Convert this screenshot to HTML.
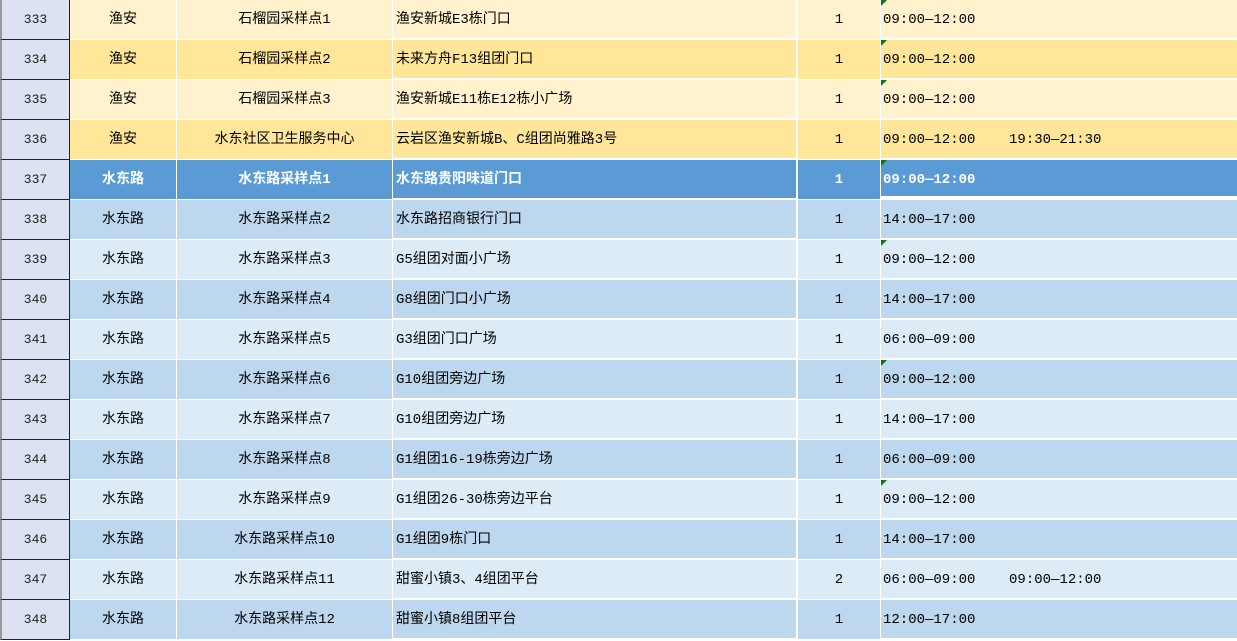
<!DOCTYPE html><html><head><meta charset="utf-8"><style>
body{margin:0;width:1237px;height:639px;overflow:hidden;background:#fff;font-family:"Liberation Mono","Noto Sans CJK SC",sans-serif;font-size:14px;color:#000}
.r{position:absolute;left:0;width:1237px;height:40px}
.c{position:absolute;top:0;height:39px;line-height:41px;border-right:1px solid #fff;border-bottom:1px solid #fff;white-space:pre;box-sizing:content-box}
.h{left:0;width:67px;background:#dce2f1;border-left:2px solid #9a9a9a;border-right:1px solid #222;border-bottom:1px solid #222;text-align:center;font-size:13px;color:#222;line-height:39px}
.b{left:70px;width:106px;text-align:center}
.cc{left:177px;width:215px;text-align:center}
.d{left:393px;width:404px;padding-left:3px;box-sizing:border-box;width:404px}
.e{left:798px;width:82px;text-align:center}
.f{left:881px;width:356px;padding-left:2px;box-sizing:border-box;border-right:none}
.t::before{content:"";position:absolute;left:0;top:0;border-top:6px solid #0a7a0a;border-right:6px solid transparent}
.bold{font-weight:bold;color:#fff}
</style></head><body>
<div id="g"></div>
<script>
var rows=[
["333","渔安","石榴园采样点1","渔安新城E3栋门口","1","09:00—12:00","#fff2cc",1],
["334","渔安","石榴园采样点2","未来方舟F13组团门口","1","09:00—12:00","#ffe699",1],
["335","渔安","石榴园采样点3","渔安新城E11栋E12栋小广场","1","09:00—12:00","#fff2cc",1],
["336","渔安","水东社区卫生服务中心","云岩区渔安新城B、C组团尚雅路3号","1","09:00—12:00    19:30—21:30","#ffe699",0],
["337","水东路","水东路采样点1","水东路贵阳味道门口","1","09:00—12:00","#5b9bd5",1],
["338","水东路","水东路采样点2","水东路招商银行门口","1","14:00—17:00","#bdd7ee",0],
["339","水东路","水东路采样点3","G5组团对面小广场","1","09:00—12:00","#ddebf7",1],
["340","水东路","水东路采样点4","G8组团门口小广场","1","14:00—17:00","#bdd7ee",0],
["341","水东路","水东路采样点5","G3组团门口广场","1","06:00—09:00","#ddebf7",0],
["342","水东路","水东路采样点6","G10组团旁边广场","1","09:00—12:00","#bdd7ee",1],
["343","水东路","水东路采样点7","G10组团旁边广场","1","14:00—17:00","#ddebf7",0],
["344","水东路","水东路采样点8","G1组团16-19栋旁边广场","1","06:00—09:00","#bdd7ee",0],
["345","水东路","水东路采样点9","G1组团26-30栋旁边平台","1","09:00—12:00","#ddebf7",1],
["346","水东路","水东路采样点10","G1组团9栋门口","1","14:00—17:00","#bdd7ee",0],
["347","水东路","水东路采样点11","甜蜜小镇3、4组团平台","2","06:00—09:00    09:00—12:00","#ddebf7",0],
["348","水东路","水东路采样点12","甜蜜小镇8组团平台","1","12:00—17:00","#bdd7ee",0]];
var h="";rows.forEach(function(r,i){var bg=r[6],bo=i==4?' bold':'';
h+='<div class="r" style="top:'+(i*40)+'px">'+
'<div class="c h">'+r[0]+'</div>'+
'<div class="c b'+bo+'" style="background:'+bg+'">'+r[1]+'</div>'+
'<div class="c cc'+bo+'" style="background:'+bg+'">'+r[2]+'</div>'+
'<div class="c d'+bo+'" style="background:'+bg+'">'+r[3]+'</div>'+
'<div class="c e'+bo+'" style="background:'+bg+'">'+r[4]+'</div>'+
'<div class="c f'+bo+(r[7]?' t':'')+'" style="background:'+bg+(i==4?';border-bottom:2px solid #fff;height:38px':'')+'">'+r[5]+'</div></div>';});
document.getElementById("g").innerHTML=h;
</script>
</body></html>
